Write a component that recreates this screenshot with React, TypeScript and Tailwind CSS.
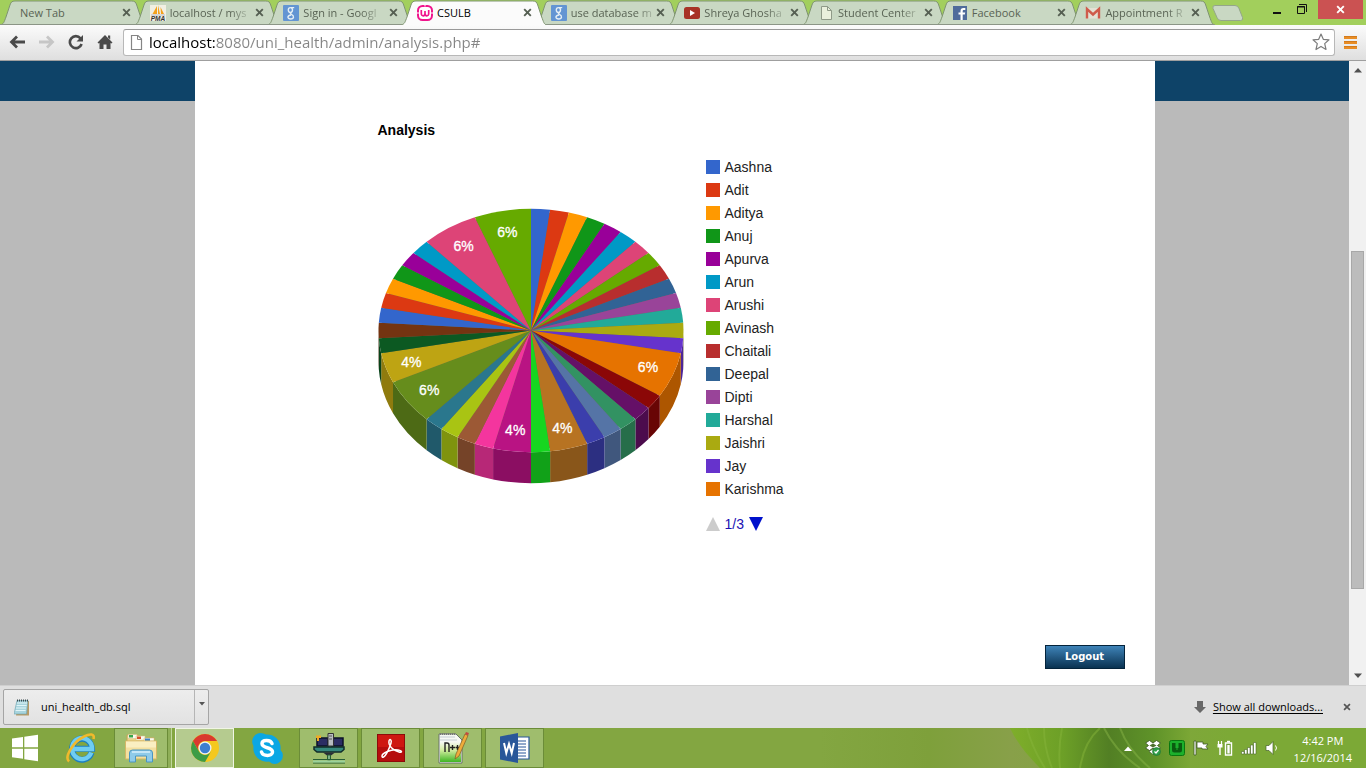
import React from "react";

const ui = "font-['Open_Sans','Noto_Sans',sans-serif]";

type Slice = { color: string; units: number; name?: string; label?: string };

const slices: Slice[] = [
  { color: "#3366cc", units: 1, name: "Aashna" },
  { color: "#dc3912", units: 1, name: "Adit" },
  { color: "#ff9900", units: 1, name: "Aditya" },
  { color: "#109618", units: 1, name: "Anuj" },
  { color: "#990099", units: 1, name: "Apurva" },
  { color: "#0099c6", units: 1, name: "Arun" },
  { color: "#dd4477", units: 1, name: "Arushi" },
  { color: "#66aa00", units: 1, name: "Avinash" },
  { color: "#b82e2e", units: 1, name: "Chaitali" },
  { color: "#316395", units: 1, name: "Deepal" },
  { color: "#994499", units: 1, name: "Dipti" },
  { color: "#22aa99", units: 1, name: "Harshal" },
  { color: "#aaaa11", units: 1, name: "Jaishri" },
  { color: "#6633cc", units: 1, name: "Jay" },
  { color: "#e67300", units: 3, name: "Karishma", label: "6%" },
  { color: "#8b0707", units: 1 },
  { color: "#651067", units: 1 },
  { color: "#329262", units: 1 },
  { color: "#5574a6", units: 1 },
  { color: "#3b3eac", units: 1 },
  { color: "#b77322", units: 2, label: "4%" },
  { color: "#16d620", units: 1 },
  { color: "#b91383", units: 2, label: "4%" },
  { color: "#f4359e", units: 1 },
  { color: "#9c5935", units: 1 },
  { color: "#a9c413", units: 1 },
  { color: "#2a778d", units: 1 },
  { color: "#668d1c", units: 3, label: "6%" },
  { color: "#bea413", units: 2, label: "4%" },
  { color: "#0c5922", units: 1 },
  { color: "#743411", units: 1 },
  { color: "#3366cc", units: 1 },
  { color: "#dc3912", units: 1 },
  { color: "#ff9900", units: 1 },
  { color: "#109618", units: 1 },
  { color: "#990099", units: 1 },
  { color: "#0099c6", units: 1 },
  { color: "#dd4477", units: 3, label: "6%" },
  { color: "#66aa00", units: 3, label: "6%" },
];

const TOTAL = 50;
const CX = 153;
const CY = 122.5;
const RX = 152.5;
const RY = 121.7;
const DEPTH = 31;

function at(u: number, k = 1): [number, number] {
  const a = (u / TOTAL) * Math.PI * 2;
  return [CX + Math.sin(a) * RX * k, CY - Math.cos(a) * RY * k];
}

function darken(hex: string) {
  const n = parseInt(hex.slice(1), 16);
  const f = (v: number) => Math.round(v * 0.75);
  return `rgb(${f(n >> 16)},${f((n >> 8) & 255)},${f(n & 255)})`;
}

function PieChart() {
  let pos = 0;
  const parts = slices.map((s) => {
    const start = pos;
    pos += s.units;
    return { ...s, start, end: pos };
  });
  return (
    <svg width="306" height="276" viewBox="0 0 306 276" role="img" aria-label="Analysis pie chart">
      {parts.map((p, i) => {
        const a = Math.max(p.start, 12.5);
        const b = Math.min(p.end, 37.5);
        if (a >= b) return null;
        const [x1, y1] = at(a);
        const [x2, y2] = at(b);
        return (
          <path
            key={i}
            fill={darken(p.color)}
            d={`M${x1} ${y1}A${RX} ${RY} 0 0 1 ${x2} ${y2}V${y2 + DEPTH}A${RX} ${RY} 0 0 0 ${x1} ${y1 + DEPTH}Z`}
          />
        );
      })}
      <ellipse cx={CX} cy={CY} rx={RX - 3} ry={RY - 3} fill="#6b6b55" />
      {parts.map((p, i) => {
        const [x1, y1] = at(p.start);
        const [x2, y2] = at(p.end);
        return <path key={i} fill={p.color} d={`M${CX} ${CY}L${x1} ${y1}A${RX} ${RY} 0 0 1 ${x2} ${y2}Z`} />;
      })}
      {parts
        .filter((p) => p.label)
        .map((p, i) => {
          const [x, y] = at((p.start + p.end) / 2, 0.825);
          return (
            <text
              key={i}
              x={x}
              y={y + 5}
              textAnchor="middle"
              fill="#fff"
              className="font-['Liberation_Sans',Arial,sans-serif] text-[14px] font-normal"
              stroke="#fff"
              strokeWidth="0.3"
            >
              {p.label}
            </text>
          );
        })}
    </svg>
  );
}

function GoogleIcon() {
  return (
    <svg width="16" height="16" viewBox="0 0 16 16">
      <rect width="16" height="16" rx="1" fill="#6395d3" />
      <g fill="none" stroke="#e4eef5" strokeWidth="1.4">
        <ellipse cx="7.4" cy="5" rx="2.1" ry="2.400" />
        <path d="M8 2.600h3.200M8.800 7.300c-1.700.5-1.900 1.300-.4 2 3 1.400 2.800 4.700-.7 4.700-3.700 0-3.700-3.600.3-4" />
      </g>
    </svg>
  );
}

function PageIcon() {
  return (
    <svg width="16" height="16" viewBox="0 0 16 16">
      <path d="M3.500 1.500h6l4 4v9h-10z" fill="#e9f0dc" stroke="#8f9a88" />
      <path d="M9.500 1.500v4h4" fill="none" stroke="#8f9a88" />
    </svg>
  );
}

function PmaIcon() {
  return (
    <svg width="16" height="16" viewBox="0 0 16 16">
      <rect width="16" height="16" fill="#f1efe3" />
      <path d="M7 1v8H2.500zM8 0l2 9H8zM10.500 2l3.500 7h-3z" fill="#f4a11c" />
      <path d="M1 10h14" stroke="#b9b9c4" />
      <text x="8" y="16" textAnchor="middle" fontSize="6.500" fontWeight="bold" fontStyle="italic" fill="#333" fontFamily="Liberation Sans, sans-serif">
        PMA
      </text>
    </svg>
  );
}

function WampIcon() {
  return (
    <svg width="16" height="16" viewBox="0 0 16 16">
      <rect x="1" y="1" width="14" height="14" rx="4.500" fill="#fff" stroke="#f0148c" strokeWidth="2" />
      <path d="M4.300 5v3.500c0 3.200 3.700 3 3.700 0V6v2.500c0 3 3.700 3.200 3.700 0V5" fill="none" stroke="#f0148c" strokeWidth="1.700" />
      <path d="M0 8h2M14 8h2M8 0v1.500" stroke="#fff" />
    </svg>
  );
}

function YoutubeIcon() {
  return (
    <svg width="16" height="16" viewBox="0 0 16 16">
      <rect y="2" width="16" height="12" rx="2.500" fill="#a83226" />
      <path d="M6 5v6l5-3z" fill="#fff" />
    </svg>
  );
}

function FacebookIcon() {
  return (
    <svg width="16" height="14" viewBox="0 0 16 14">
      <rect x="1" width="14" height="14" fill="#4f6b9b" />
      <path d="M8.500 14V8.500H6.500v-2h2V5c0-2 1-3 3-3h1.800v2H12c-1 0-1.300.4-1.300 1.200v1.300h2.500l-.4 2h-2.100V14z" fill="#fff" />
    </svg>
  );
}

function GmailIcon() {
  return (
    <svg width="16" height="16" viewBox="0 0 16 16">
      <path d="M1 3h14v10.500H1z" fill="#e3e1d4" />
      <path d="M2 13.500V4l6 5.500L14 4v9.500" fill="none" stroke="#cf5b4b" strokeWidth="2.400" />
    </svg>
  );
}

function Cross({ size = 9, color = "#555f52" }: { size?: number; color?: string }) {
  return (
    <svg width={size} height={size} viewBox="0 0 9 9">
      <path d="M1.200 1.200l6.600 6.600M7.800 1.200L1.200 7.800" stroke={color} strokeWidth="1.900" />
    </svg>
  );
}

const tabs: { title: string; icon?: React.ReactNode; active?: boolean; faded?: boolean }[] = [
  { title: "New Tab" },
  { title: "localhost / mys", icon: <PmaIcon />, faded: true },
  { title: "Sign in - Googl", icon: <GoogleIcon />, faded: true },
  { title: "CSULB", icon: <WampIcon />, active: true },
  { title: "use database m", icon: <GoogleIcon />, faded: true },
  { title: "Shreya Ghosha", icon: <YoutubeIcon />, faded: true },
  { title: "Student Center", icon: <PageIcon />, faded: true },
  { title: "Facebook", icon: <FacebookIcon /> },
  { title: "Appointment R", icon: <GmailIcon />, faded: true },
];

function TabStrip() {
  return (
    <header className="flex h-[25px] bg-[#a2cf5c]">
      <div role="tablist" className="flex min-w-0 flex-1">
        {tabs.map((t, i) => (
          <div key={i} className={`relative flex min-w-0 flex-1 items-center pl-4 pr-[2px] ${t.active ? "z-10" : ""}`}>
            <svg
              className="absolute top-0 left-0 h-[25px] w-[calc(100%+12px)]"
              viewBox="0 0 146 25"
              preserveAspectRatio="none"
            >
              <path
                d="M0 25C4 24 4 22 6 17L10 5C11 2 12 1 15 1H132C135 1 136 2 137 5L141 17C143 22 143 24 146 25"
                fill={t.active ? "#fbfbfb" : "#c9d8c3"}
                stroke="#7e9470"
              />
              {!t.active && <path d="M0 24.500H146" stroke="#8b9586" />}
            </svg>
            <button
              role="tab"
              aria-selected={!!t.active}
              className={`${ui} relative flex min-w-0 flex-1 items-center gap-1 text-left text-[11px] leading-5 whitespace-nowrap ${t.active ? "text-black" : "text-[#596354]"}`}
            >
              {t.icon && <span className="shrink-0">{t.icon}</span>}
              <span
                className={`${t.icon ? "" : "pl-1"} ${t.faded ? "[mask-image:linear-gradient(to_right,black_calc(100%-16px),rgb(0_0_0/0.3))]" : ""}`}
              >
                {t.title}
              </span>
            </button>
            <button aria-label={`Close ${t.title}`} className="relative p-px">
              <Cross />
            </button>
          </div>
        ))}
      </div>
      <div className="flex w-[163px] items-start justify-between pl-2">
        <button aria-label="New tab" className="pt-[5px]">
          <svg width="34" height="16" viewBox="0 0 34 16">
            <path d="M4 .5h20q3 0 4 3l3.500 9q1 3-2 3H10q-3 0-4-3L2 3.500Q1 .5 4 .5z" fill="#c9d8c3" stroke="#94a68a" />
          </svg>
        </button>
        <div className="flex items-start">
          <button aria-label="Minimize" className="p-1 pt-[5px]">
            <svg width="10" height="10" viewBox="0 0 10 10">
              <path d="M1 8h8" stroke="#111" strokeWidth="2" />
            </svg>
          </button>
          <button aria-label="Restore" className="mx-[6px] p-1">
            <svg width="12" height="11" viewBox="0 0 12 11">
              <path d="M1.500 2.500h7v7h-7zM3 .5h7.500V8" fill="none" stroke="#111" />
              <path d="M1 3h8" stroke="#111" />
            </svg>
          </button>
          <button aria-label="Close window" className="mr-[3px] flex h-[19px] w-[45px] items-center justify-center bg-[#cb5252]">
            <Cross color="#fff" />
          </button>
        </div>
      </div>
    </header>
  );
}

function Toolbar() {
  return (
    <div className="flex h-9 items-center border-b border-[#9f9f9f] bg-linear-to-b from-[#fbfbfb] to-[#dfdfdf] pr-2 pb-px pl-2">
      <nav className="flex items-center gap-[9px]">
        <button aria-label="Back">
          <svg width="20" height="16" viewBox="0 0 20 16">
            <path d="M17 8H4M9 2.500L3.500 8 9 13.500" fill="none" stroke="#4a4a4a" strokeWidth="2.800" />
          </svg>
        </button>
        <button aria-label="Forward">
          <svg width="20" height="16" viewBox="0 0 20 16">
            <path d="M2 8h13M10 2.500L15.500 8 10 13.500" fill="none" stroke="#c6c6c6" strokeWidth="2.800" />
          </svg>
        </button>
        <button aria-label="Reload">
          <svg width="20" height="16" viewBox="0 0 20 16">
            <path d="M14.500 4.300A6 6 0 1 0 15.600 10" fill="none" stroke="#4a4a4a" strokeWidth="2.600" />
            <path d="M17 1v6.500h-6.500z" fill="#4a4a4a" />
          </svg>
        </button>
        <button aria-label="Home">
          <svg width="20" height="16" viewBox="0 0 20 16">
            <path d="M10 1l7.500 7.500-1 1L15.500 9v6h-4v-4.500h-3V15h-4V9l-1 .5-1-1zM13 1.500h2.200v4L13 3.500z" fill="#4a4a4a" />
          </svg>
        </button>
      </nav>
      <div className="ml-2 flex h-[27px] min-w-0 flex-1 items-center rounded-[3px] border border-[#b8b8b8] border-t-[#999] bg-white">
        <svg className="mr-[5px] ml-1 shrink-0" width="16" height="18" viewBox="0 0 16 18">
          <path d="M3.500 2.500h6.500l3.500 3.500v10.500h-10z" fill="#fff" stroke="#858585" strokeWidth="1.200" />
          <path d="M9.500 2.500v4h4" fill="none" stroke="#858585" />
        </svg>
        <input
          aria-label="Address"
          className={`${ui} h-6 min-w-0 flex-1 bg-[linear-gradient(to_right,#000_66px,#858585_66px)] bg-clip-text text-[15px] leading-6 text-transparent outline-none`}
          defaultValue="localhost:8080/uni_health/admin/analysis.php#"
        />
        <button aria-label="Bookmark this page" className="px-1">
          <svg width="18" height="18" viewBox="0 0 18 18">
            <path d="M9 1l2.300 5.300 5.700.5-4.300 3.800 1.300 5.900L9 13.400 4 16.500l1.300-5.900L1 6.800l5.700-.5z" fill="#fff" stroke="#7c7c7c" strokeWidth="1.200" strokeLinejoin="round" />
          </svg>
        </button>
      </div>
      <button aria-label="Menu" className="ml-[9px]">
        <svg width="14" height="13" viewBox="0 0 14 13">
          <path d="M0 1.500h13M0 6.500h13M0 11.500h13" stroke="#e88d25" strokeWidth="3" />
          <path d="M0 .5h13M0 5.500h13M0 10.500h13" stroke="#d27a1c" />
        </svg>
      </button>
    </div>
  );
}

function SideBand() {
  return (
    <div className="min-w-0 flex-1 bg-[#bababa]">
      <div className="h-10 bg-[#0e4368]" />
    </div>
  );
}

function Scrollbar() {
  return (
    <div className="flex w-[17px] flex-col items-center bg-[#f1f1f1] py-[7px]">
      <svg width="8" height="5" viewBox="0 0 8 5"><path d="M4 0l4 4.500H0z" fill="#505050" /></svg>
      <div className="flex min-h-0 flex-1 flex-col pt-[178px] pb-[84px]">
        <div className="w-[13px] flex-1 border border-[#a8a8a8] bg-[#bcbcbc]" />
      </div>
      <svg width="8" height="5" viewBox="0 0 8 5"><path d="M4 5L0 .5h8z" fill="#505050" /></svg>
    </div>
  );
}

function Content() {
  return (
    <main className="flex w-[960px] flex-col bg-white pt-[61px] pr-[30px] pb-4 pl-[183px] font-['Liberation_Sans',Arial,sans-serif]">
      <h1 className="text-[14px] leading-4 font-bold text-black">Analysis</h1>
      <section className="mt-[18px] flex items-start">
        <div className="pt-[52px]">
          <PieChart />
        </div>
        <div className="ml-[22px]">
          <ul>
            {slices
              .filter((s) => s.name)
              .map((s) => (
                <li key={s.name} className="flex h-[23px] items-start gap-[5px] text-[14px] leading-[23px] text-[#222]">
                  <span className="mt-1 size-[14px]" style={{ backgroundColor: s.color }} />
                  {s.name}
                </li>
              ))}
          </ul>
          <div className="mt-3 flex h-[22px] items-center gap-[5px] text-[14px] text-[#1a10b4]">
            <button aria-label="Previous page" disabled>
              <svg width="14" height="14" viewBox="0 0 14 14"><path d="M7 0l7 14H0z" fill="#ccc" /></svg>
            </button>
            <span>1/3</span>
            <button aria-label="Next page">
              <svg width="14" height="14" viewBox="0 0 14 14"><path d="M7 14L0 0h14z" fill="#0011cc" /></svg>
            </button>
          </div>
        </div>
      </section>
      <button className="mt-auto h-6 w-20 self-end border border-[#04233b] bg-linear-to-b from-[#3f84b9] to-[#0a3352] font-['DejaVu_Sans','Open_Sans',sans-serif] text-[10px] leading-5 font-bold text-white">
        Logout
      </button>
    </main>
  );
}

function DownloadBar() {
  return (
    <div className={`${ui} flex h-[43px] items-center justify-between border-t border-[#cfcfcf] bg-[#dfdfdf] pr-[15px] pl-[3px] text-[11px] text-black`}>
      <div className="flex h-9 w-[206px] rounded-[2px] border border-[#a5a5a5] bg-linear-to-b from-[#ededed] to-[#e2e2e2]">
        <button className="flex min-w-0 flex-1 items-center gap-[11px] pl-[10px]">
          <svg width="16" height="17" viewBox="0 0 16 17">
            <path d="M4 2h11v14.500H2z" fill="#b99b66" />
            <path d="M3 1.500h11L12.500 15H0z" fill="#a8d4dd" stroke="#6aa1ae" strokeWidth=".6" />
            <path d="M3 4h10M2.600 6.500h10M2 9h10M1.600 11.500h10" stroke="#e0f5f8" />
            <path d="M3 1.500h11" stroke="#38484c" strokeWidth="2" strokeDasharray="1 1" />
          </svg>
          uni_health_db.sql
        </button>
        <button aria-label="Download options" className="flex w-[14px] items-start justify-center border-l border-[#b5b5b5] pt-3">
          <svg width="6" height="4" viewBox="0 0 6 4"><path d="M0 0h6L3 3.500z" fill="#555" /></svg>
        </button>
      </div>
      <div className="flex items-center">
        <svg width="12" height="12" viewBox="0 0 12 12"><path d="M3 0h6v6h3l-6 6-6-6h3z" fill="#686868" /></svg>
        <a href="#downloads" className="ml-[7px] underline underline-offset-2">Show all downloads...</a>
        <button aria-label="Close downloads bar" className="ml-5"><Cross size={8} color="#555" /></button>
      </div>
    </div>
  );
}

function FolderIcon() {
  return (
    <svg width="34" height="30" viewBox="0 0 34 30">
      <path d="M3 2h11l2 3h14v20H3z" fill="#ecd38a" stroke="#c5a557" />
      <path d="M4 1.500h9v4H4zM12 3h9v4h-9zM20 5h10v4H20z" fill="#fbfaf0" stroke="#d5bf80" strokeWidth=".5" />
      <path d="M5 2h4v2.500H5z" fill="#36a64b" />
      <path d="M13 3.500h4V6h-4z" fill="#d5502a" />
      <path d="M21 5.500h5V8h-5z" fill="#3d83c6" />
      <path d="M1.500 8h31v18h-31z" fill="#f3e0a0" stroke="#d4b766" />
      <path d="M2 8.500h30v6H2z" fill="#faefc2" />
      <path d="M5.500 29v-9q0-3 3-3h17q3 0 3 3v9h-6v-6h-11v6z" fill="#8fcbe9" stroke="#4b95c0" />
      <path d="M8 19h18" stroke="#d8f0fb" strokeWidth="1.500" />
    </svg>
  );
}

function ChromeIcon() {
  return (
    <svg width="30" height="30" viewBox="0 0 30 30">
      <circle cx="15" cy="15" r="14" fill="#f4c81e" />
      <path d="M2.900 8A14 14 0 0 1 27.100 8H15a7 7 0 0 0-6 10.500z" fill="#d93a2f" />
      <path d="M2.900 8A14 14 0 0 0 15 29l6-10.500a7 7 0 0 1-12 0z" fill="#3d9c46" />
      <circle cx="15" cy="15" r="6.500" fill="#eef2f5" />
      <circle cx="15" cy="15" r="5.200" fill="#3d7fd0" />
    </svg>
  );
}

function Leaf() {
  return (
    <svg aria-hidden="true" className="absolute top-0 right-[176px] h-10 w-[180px]" viewBox="0 0 180 40" preserveAspectRatio="none">
      <defs>
        <linearGradient id="leaf" x1="0" x2="1">
          <stop offset="0" stopColor="#7fae2a" />
          <stop offset=".3" stopColor="#6c9f27" />
          <stop offset=".55" stopColor="#527f24" />
          <stop offset=".8" stopColor="#5f9329" />
          <stop offset="1" stopColor="#7ba735" />
        </linearGradient>
      </defs>
      <path d="M0 0H180V40H30C18 28 7 15 0 0z" fill="url(#leaf)" />
      <path d="M17 0q5 20 18 40M34 0q0 20 8 40M52 0q-4 20-2 40M70 40Q74 14 90 0" fill="none" stroke="#86b43a" strokeOpacity=".5" strokeWidth="2" />
      <path d="M94 0q12 24 36 40M110 0q8 22 30 40" fill="none" stroke="#8cb84a" strokeOpacity=".45" strokeWidth="2" />
    </svg>
  );
}

function Taskbar() {
  const item = "flex h-10 items-center justify-center border border-[#c1d69b] bg-[#9fbd6d] outline outline-[#6b8c38] -outline-offset-1";
  return (
    <footer className="relative flex h-10 bg-[linear-gradient(to_right,#83a641_0%,#83a641_60%,#7ea03b_68%,#88a049_74%,#7ca936_90%,#7ca936_100%)]">
      <Leaf />
      <div className="relative flex min-w-0 flex-1 items-center">
        <button aria-label="Start" className="flex w-[50px] justify-center">
          <svg width="28" height="28" viewBox="0 0 28 28">
            <path d="M1 4.500l11-1.600v10.400H1zM13.300 2.700L27 .8v12.500H13.300zM1 14.700h11v10L1 23.200zM13.300 14.700H27v12.500l-13.700-2z" fill="#fff" />
          </svg>
        </button>
        <button aria-label="Internet Explorer" className="flex w-[62px] justify-center">
          <svg width="32" height="32" viewBox="0 0 32 32">
            <path d="M26.500 20.500A10 10.500 0 1 1 27 16.800H9" fill="none" stroke="#1d7fc0" strokeWidth="6" />
            <path d="M26.300 20.500A10 10.500 0 1 1 27 17H9" fill="none" stroke="#6fcdf2" strokeWidth="4.400" />
            <path d="M4 29.500C-1 25 8 10 19 4.500c6-3 11-3 9.500 2.500" fill="none" stroke="#f0b92c" strokeWidth="2.600" />
          </svg>
        </button>
        <button aria-label="File Explorer" className={`${item} ml-[2px] w-[54px]`}><FolderIcon /></button>
        <span className="h-10 w-1 border-r border-[#c1d69b] bg-[#8faf58]" />
        <button aria-label="Chrome" className="ml-[3px] flex h-10 w-[59px] items-center justify-center border border-[#f0f5e5] bg-[#b5cb8f]"><ChromeIcon /></button>
        <button aria-label="Skype" className="flex w-[65px] justify-center">
          <svg width="32" height="32" viewBox="0 0 32 32">
            <path d="M9 1q4 0 6 1.500A13.500 13.500 0 0 1 29.500 18 8 8 0 0 1 18 29.500 13.500 13.500 0 0 1 2.500 14 8.500 8.500 0 0 1 9 1z" fill="#0ba7e4" />
            <path d="M21 11.500c-1.400-4.300-10-4-10 0 0 5.500 10.500 3 10.500 8.500 0 4.500-9.500 4.500-11 0" fill="none" stroke="#fff" strokeWidth="3.500" strokeLinecap="round" />
          </svg>
        </button>
        <div className="flex gap-[3px]">
          <button aria-label="WampServer" className={`${item} w-[59px]`}>
            <svg width="34" height="32" viewBox="0 0 34 32">
              <path d="M5 6h11v8H5zM20 6h11v8H20z" fill="#2b2d63" stroke="#0c1228" strokeWidth="1.500" />
              <path d="M16 1.500h5.500V14H16z" fill="#b8bdc1" stroke="#333" />
              <path d="M17 4h3M17 7h3" stroke="#555" />
              <path d="M4 3.500h5V6H7v3H5V6H4z" fill="#eeaa26" />
              <path d="M2 15h30v2.500l-3 2.500H5l-3-2.500z" fill="#35877b" stroke="#102c2a" strokeWidth="1.500" />
              <path d="M11 20.500h12l-4 3h-4z" fill="#282c36" />
              <path d="M15.500 23h3v5h-3z" fill="#7db289" stroke="#275e33" />
              <path d="M1 27.500h32M1 31h32" fill="none" stroke="#275e33" />
              <path d="M1 29.500h32" stroke="#9ad29c" strokeWidth="2" />
            </svg>
          </button>
          <button aria-label="Adobe Reader" className={`${item} w-[59px]`}>
            <svg width="28" height="28" viewBox="0 0 28 28">
              <path d="M0 0h28v28H0z" fill="#b50d0d" stroke="#690b08" />
              <path d="M1 1h26v12H1z" fill="#ce1711" />
              <path d="M5 22c0-3 9-7 16-6 5 1 4 3 1 2-5-1-11-6-10-11 .7-3 3-1 2 2C13 13 9 22 6.500 23 5.500 23.500 5 23 5 22z" fill="none" stroke="#fff" strokeWidth="1.500" />
            </svg>
          </button>
          <button aria-label="Notepad++" className={`${item} w-[59px]`}>
            <svg width="32" height="32" viewBox="0 0 32 32">
              <defs>
                <linearGradient id="npp" x1="0" y1="0" x2="0" y2="1">
                  <stop offset="0" stopColor="#f6f8f4" />
                  <stop offset=".4" stopColor="#d3eda0" />
                  <stop offset="1" stopColor="#3fb523" />
                </linearGradient>
              </defs>
              <path d="M2 2h17l6 6v23H2z" fill="#f6f8f4" stroke="#68736a" />
              <path d="M3 10h21v20H3z" fill="url(#npp)" />
              <path d="M3 5h15M3 8h17" stroke="#c5ced4" />
              <path d="M3 2h16" stroke="#777" strokeWidth="2" strokeDasharray="1 1" />
              <path d="M8 20v-9h2q2 0 2 2v7M13 15.500h5M15.500 13v5M18.500 15.500h4M20.500 13v5" fill="none" stroke="#222" strokeWidth="1.400" />
              <path d="M18 27l1-5L28 2l3 1.500-9 20.500z" fill="#efab3b" stroke="#805d24" strokeWidth=".7" />
              <path d="M28 2l1-2 3 1-1 2.500z" fill="#c34a40" />
            </svg>
          </button>
          <button aria-label="Word" className={`${item} w-[59px]`}>
            <svg width="30" height="30" viewBox="0 0 30 30">
              <path d="M17 4h12v22H17z" fill="#fff" stroke="#295799" strokeWidth="1.200" />
              <path d="M18 8h8M18 11h8M18 14h8M18 17h8M18 20h8M18 23h8" stroke="#295799" strokeWidth="1.200" />
              <path d="M0 3.500L18 0v30L0 26.500z" fill="#295799" />
              <path d="M4 10l2.300 10L9 11l2.700 9L14 10" fill="none" stroke="#fff" strokeWidth="2" />
            </svg>
          </button>
        </div>
      </div>
      <div className="relative flex items-center gap-2 pr-[14px]">
        <button aria-label="Show hidden icons">
          <svg width="8" height="5" viewBox="0 0 8 5"><path d="M4 .5L8 5H0z" fill="#fff" /></svg>
        </button>
        <svg className="ml-[5px]" width="16" height="16" viewBox="0 0 16 16">
          <path d="M4.500 .5L8 3l3.500-2.500L15.500 3 12.500 5.500 15.500 8 11.500 10.500 8 8l-3.500 2.500L.5 8l3-2.500L.5 3z" fill="#fff" stroke="#36511f" strokeWidth=".8" />
          <path d="M8 3.500l3.500 2L8 7.500l-3.500-2z" fill="#4d7030" />
          <path d="M4 11.500L8 9l4 2.500L8 14.500z" fill="#fff" stroke="#36511f" strokeWidth=".6" />
          <circle cx="11.500" cy="11.500" r="4" fill="#2f9e48" stroke="#1f6f32" strokeWidth=".6" />
          <path d="M9.500 11.500l1.500 1.500L13.500 10" fill="none" stroke="#fff" strokeWidth="1.200" />
        </svg>
        <svg width="16" height="16" viewBox="0 0 16 16">
          <rect x=".5" y=".5" width="15" height="15" rx="2" fill="#1cb02c" stroke="#08780f" />
          <path d="M3 3h3.500v5h3V3H13v7q0 2.500-2.500 2.500h-5Q3 12.500 3 10z" fill="#0a5c10" />
          <path d="M7.500 5h1v5h-1z" fill="#1cb02c" />
        </svg>
        <svg width="16" height="16" viewBox="0 0 16 16">
          <path d="M1 1h2v14H1zM4 2h6v2h5l-2 2.500 2 2.500H9V8H4z" fill="#fff" stroke="#3f5a26" strokeWidth=".8" />
        </svg>
        <svg width="16" height="16" viewBox="0 0 16 16">
          <path d="M8.500 3h6v12h-6z" fill="#6f9c35" stroke="#fff" strokeWidth="1.400" />
          <path d="M10 .8h3V2.500h-3z" fill="#fff" />
          <path d="M10.300 5h2.400v8.500h-2.400z" fill="#fff" />
          <path d="M1.500 1v3M4.500 1v3" stroke="#fff" strokeWidth="1.200" />
          <path d="M.5 4h5v3.500h-5zM2.300 7.500h1.400V15H2.300z" fill="#fff" />
        </svg>
        <svg width="16" height="14" viewBox="0 0 16 14">
          <path d="M.5 10.500H3V13H.5zM3.500 8.500H6V13H3.500zM6.500 6.500H9V13H6.500zM9.500 4H12v9H9.500zM12.500 1.500H15V13h-2.500z" fill="#fff" stroke="#4a6a29" strokeWidth=".6" />
        </svg>
        <svg width="16" height="16" viewBox="0 0 16 16">
          <path d="M1 5.500h3L8 1.500v13l-4-4H1z" fill="#fff" stroke="#45622a" strokeWidth=".7" />
          <path d="M10.500 5.500q2 2.500 0 5" fill="none" stroke="#fff" />
        </svg>
        <time className={`${ui} ml-[5px] pt-px text-center text-[11px] leading-[17px] text-white`}>
          4:42 PM
          <br />
          12/16/2014
        </time>
      </div>
    </footer>
  );
}

export default function App() {
  return (
    <div className="flex min-h-screen flex-col overflow-hidden">
      <TabStrip />
      <Toolbar />
      <div className="flex flex-1">
        <SideBand />
        <Content />
        <SideBand />
        <Scrollbar />
      </div>
      <DownloadBar />
      <Taskbar />
    </div>
  );
}
